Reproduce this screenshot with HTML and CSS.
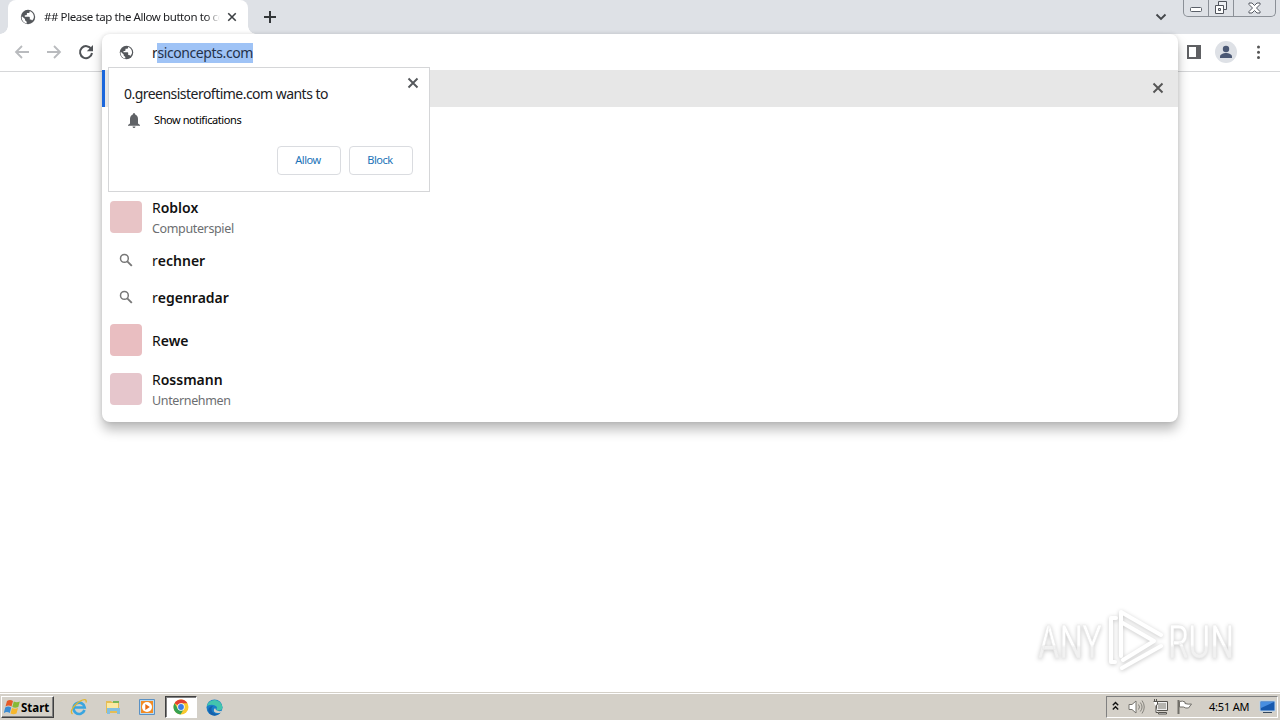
FILE: index.html
```html
<!DOCTYPE html>
<html lang="en">

<head>
  <meta charset="UTF-8">
  <title>Browser Desktop</title>
  <link rel="stylesheet" href="styles.css">
</head>

<body>
  <!-- Shared icons -->
  <svg class="defs" width="0" height="0">
    <symbol id="globe" viewBox="0 0 16 16">
      <circle cx="8" cy="8" r="7.2" fill="#55585c"/>
      <path d="M1.9 7.2 5 10.1v1.2l1.7 1.5v1.7C3.8 14 1.8 11.500 1.600 8.500zM9.700 1.900v.8c0 .8-.6 1.400-1.400 1.400H6.900v1.400c0 .5-.4.8-.8.8H4.800v1.500h4.300c.4 0 .7.300.7.700v2.100h.8c.7 0 1.200.4 1.400 1 1.200-1 1.900-2.300 1.900-3.800 0-2.600-1.700-5-4.200-5.900z" fill="#fff"/>
    </symbol>
    <symbol id="cross" viewBox="0 0 12 12">
      <path d="M1.500 1.500l9 9M10.500 1.500l-9 9" fill="none" stroke="currentColor" stroke-width="1.900"/>
    </symbol>
    <symbol id="search" viewBox="0 0 14 14">
      <circle cx="5.400" cy="5.400" r="3.900" fill="none" stroke="#777" stroke-width="1.500"/>
      <path d="M8.300 8.300l4.500 4.500" stroke="#777" stroke-width="1.900"/>
    </symbol>
  </svg>

  <div class="screen">
    <!-- Tab strip -->
    <div class="tab-strip">
      <div class="tab">
        <svg class="tab-icon" width="16" height="16"><use href="#globe"/></svg>
        <span class="tab-title">## Please tap the Allow button to co</span>
        <svg class="tab-close" width="10" height="10"><use href="#cross"/></svg>
      </div>
      <svg class="new-tab" width="14" height="14" viewBox="0 0 14 14"><path d="M7 1v12M1 7h12" stroke="#333639" stroke-width="2"/></svg>
      <svg class="tab-search" width="12" height="8" viewBox="0 0 12 8"><path d="M1.500 1.500L6 6l4.500-4.500" fill="none" stroke="#44474b" stroke-width="1.900"/></svg>
      <div class="window-buttons">
        <span class="wb wb-min"><svg width="13" height="6" viewBox="0 0 13 6"><rect x=".5" y=".5" width="11" height="4" rx="1" fill="#fff" stroke="#5b6069"/></svg></span>
        <span class="wb wb-max"><svg width="14" height="14" viewBox="0 0 14 14"><path d="M4.500.500h8v8h-8z" fill="#eef0f4" stroke="#50545c"/><path d="M1.500 4.500h8v8h-8z" fill="#fff" stroke="#50545c"/><path d="M4.500 7.500h2v2h-2z" fill="#dee1e6" stroke="#50545c"/></svg></span>
        <span class="wb wb-close"><svg width="13" height="12" viewBox="0 0 13 12"><path d="M1 1h3l2.500 2.500L9 1h3v1.500L8.500 6 12 9.500V11H9L6.500 8.500 4 11H1V9.500L4.500 6 1 2.500z" fill="#fff" stroke="#555962"/></svg></span>
      </div>
    </div>

    <!-- Toolbar -->
    <div class="toolbar">
      <svg class="nav back" width="16" height="14" viewBox="0 0 16 14"><path d="M15 7H2M8 1L2 7l6 6" fill="none" stroke="#b9bbbe" stroke-width="1.800"/></svg>
      <svg class="nav" width="16" height="14" viewBox="0 0 16 14"><path d="M1 7h13M8 1l6 6-6 6" fill="none" stroke="#b9bbbe" stroke-width="1.800"/></svg>
      <svg class="nav" width="16" height="16" viewBox="0 0 16 16"><path d="M13.300 5.200A6 6 0 1 0 14 9" fill="none" stroke="#505357" stroke-width="2"/><path d="M15 1v6.200H8.800z" fill="#505357"/></svg>
      <div class="toolbar-right">
        <svg width="14" height="14" viewBox="0 0 14 14"><path d="M0 0h14v14H0zM2 2v10h7V2z" fill="#5f6063" fill-rule="evenodd"/></svg>
        <svg width="22" height="22" viewBox="0 0 22 22"><circle cx="11" cy="11" r="11" fill="#dee1e6"/><circle cx="11" cy="8" r="3.200" fill="#4b5874"/><path d="M5 17v-1.500c0-2.300 3.500-3.500 6-3.500s6 1.200 6 3.500V17z" fill="#4b5874"/></svg>
        <svg width="4" height="14" viewBox="0 0 4 14"><circle cx="2.500" cy="2" r="1.500" fill="#555"/><circle cx="2.500" cy="7.300" r="1.500" fill="#555"/><circle cx="2.500" cy="12.500" r="1.500" fill="#555"/></svg>
      </div>
    </div>

    <!-- Page -->
    <div class="page">
      <svg class="watermark" width="204" height="68" viewBox="0 0 204 68">
        <linearGradient id="fade" x1="0" y1="0" x2="0" y2="1">
          <stop offset=".55" stop-color="#fff"/>
          <stop offset=".6" stop-color="#f1f1f1"/>
        </linearGradient>
        <g class="mark-text" fill="url(#fade)">
          <text x="3" y="52" textLength="64" lengthAdjust="spacingAndGlyphs">ANY</text>
          <text x="133" y="52" textLength="66" lengthAdjust="spacingAndGlyphs">RUN</text>
        </g>
        <g class="mark-logo">
          <path d="M81 12h-5v44h4"/>
          <path d="M86 50V6l40 23M86 16l33 19-31 19M87 62l39-22"/>
        </g>
      </svg>
    </div>

    <!-- Taskbar -->
    <div class="taskbar">
      <div class="start">
        <svg width="17" height="16" viewBox="0 0 17 16"><path d="M3 2q3-2 6 0L7.500 7.500q-3-1.800-6 0z" fill="#e65a27"/><path d="M9.800 2.400q3 1.600 6 0L14.300 8q-3 1.600-6 0z" fill="#86b936"/><path d="M1.200 8.500q3-1.800 6 0L5.800 14q-3-1.800-6 0z" fill="#3b8cd3"/><path d="M8 9q3 1.600 6 0l-1.500 5.500q-3 1.500-6 0z" fill="#f6b72d"/></svg>
        <span>Start</span>
      </div>
      <div class="task ie">
        <svg width="18" height="18" viewBox="0 0 18 18"><path d="M14.500 12A5.600 5.600 0 1 1 14.700 9.500H4.500" fill="none" stroke="#39a5e0" stroke-width="2.600"/><path d="M2.500 16C-1 13.500 5 5 12.500 2q4.500-1.500 3.500 2.500" fill="none" stroke="#dfb632" stroke-width="1.300"/></svg>
      </div>
      <div class="task">
        <svg width="18" height="18" viewBox="0 0 18 18"><path d="M2 3h5l1 1h7v11H2z" fill="#e5bd55"/><path d="M3 5h11v7H3z" fill="#fbe9a1"/><path d="M9 3h6v2H9z" fill="#77b65a"/><path d="M3 10h13v6h-3v-3H6v3H3z" fill="#83bfe0"/></svg>
      </div>
      <div class="task">
        <svg width="18" height="18" viewBox="0 0 18 18"><path d="M1.500 1.500h15v15h-15z" fill="#b7daf2" stroke="#5a91c4"/><path d="M3 3h12v12H3z" fill="#f28b24"/><circle cx="9" cy="9" r="5" fill="#fff"/><path d="M7.300 6v6l4.500-3z" fill="#e86c14"/></svg>
      </div>
      <div class="task active">
        <svg width="16" height="16" viewBox="0 0 16 16"><circle cx="8" cy="8" r="7.500" fill="#f9c92f"/><path d="M8 8L1.500 4.200A7.500 7.500 0 0 1 14.500 4.300H8z" fill="#e34133"/><path d="M1.500 4.200A7.500 7.500 0 0 0 7.500 15.500L11 9.800 8 8 4.800 9.500z" fill="#36a152"/><circle cx="8" cy="8" r="3.700" fill="#fff"/><circle cx="8" cy="8" r="2.900" fill="#3c7de6"/></svg>
      </div>
      <div class="task edge">
        <svg width="17" height="17" viewBox="0 0 17 17"><circle cx="8.500" cy="8.500" r="8" fill="#197ec8"/><path d="M.8 7A8 8 0 0 1 16.500 8q0 3.500-4 3.500-2.500 0-2-1.500 1-1.200 0-2.500Q7 4.500.8 7z" fill="#43c5ad"/><path d="M7 7q-3 2.500-.5 6 3 3.300 7.500 1.500-5 4-10 .5Q.5 11 4 8q1.500-1.300 3-1z" fill="#1561ac"/><path d="M10 11q2.500 2 6.500.5l-1.300 2q-5 1.500-7.200-1-.8-2 1-3.500z" fill="#d4d0c8"/></svg>
      </div>
      <div class="tray">
        <svg class="chevrons" width="7" height="10" viewBox="0 0 7 10"><path d="M.8 4.200L3.500 1.500l2.700 2.700M.8 8.500l2.700-2.700 2.700 2.700" fill="none" stroke="#111" stroke-width="1.400"/></svg>
        <svg class="speaker" width="17" height="16" viewBox="0 0 17 16"><path d="M1 5.500h3L8 2v12l-4-3.500H1z" fill="#fff" stroke="#77756f"/><path d="M10.500 5.500q2 2.500 0 5M12.300 3.500q3.500 4.500 0 9M14 1.500q4.500 6.500 0 13" fill="none" stroke="#85837d"/></svg>
        <svg class="network" width="17" height="16" viewBox="0 0 17 16"><path d="M4.500 2.500h11v9h-11z" fill="#eee" stroke="#55534e"/><path d="M6 4h8v6H6z" fill="#b5b4af"/><path d="M6.500 13.500h8v1.500h-8z" fill="#eee" stroke="#55534e"/><path d="M1.500 2.500h4v3l-1.500 1v7h2" fill="#fff" stroke="#55534e"/><path d="M2.500 0v2M4.500 0v2" stroke="#55534e"/></svg>
        <svg class="flag" width="17" height="16" viewBox="0 0 17 16"><path d="M2.500 1v14" stroke="#716f69" stroke-width="2"/><path d="M3.500 2.500q3-1 5.500.5v1.500q3 1 6.500.5L12.500 9q-3 .5-5-1h-4z" fill="#fff" stroke="#716f69"/></svg>
        <span class="clock">4:51 AM</span>
        <svg class="desktop" width="17" height="14" viewBox="0 0 17 14"><path d="M1 1h15v10H1z" fill="#1759ae" stroke="#b9d5ef"/><path d="M2 2h13L2 8z" fill="#488ee0"/><path d="M4 12.500h9" stroke="#34475c"/></svg>
      </div>
    </div>

    <!-- Omnibox with suggestions -->
    <div class="omnibox">
      <div class="address">
        <svg class="site-icon" width="15" height="15"><use href="#globe"/></svg>
        <span class="url">r<mark>siconcepts.com</mark></span>
      </div>
      <div class="suggestion selected">
        <svg class="remove" width="12" height="12"><use href="#cross"/></svg>
      </div>
      <div class="suggestion"></div>
      <div class="suggestion tall"></div>
      <div class="suggestion tall">
        <span class="thumb roblox"></span>
        <div class="label"><div class="term">R<b>oblox</b></div><div class="sub">Computerspiel</div></div>
      </div>
      <div class="suggestion">
        <svg class="glass" width="14" height="14"><use href="#search"/></svg>
        <div class="label"><div class="term">r<b>echner</b></div></div>
      </div>
      <div class="suggestion">
        <svg class="glass" width="14" height="14"><use href="#search"/></svg>
        <div class="label"><div class="term">r<b>egenradar</b></div></div>
      </div>
      <div class="suggestion tall">
        <span class="thumb rewe"></span>
        <div class="label"><div class="term">R<b>ewe</b></div></div>
      </div>
      <div class="suggestion tall">
        <span class="thumb rossmann"></span>
        <div class="label"><div class="term">R<b>ossmann</b></div><div class="sub">Unternehmen</div></div>
      </div>
    </div>

    <!-- Permission prompt -->
    <div class="prompt">
      <svg class="prompt-close" width="12" height="12"><use href="#cross"/></svg>
      <div class="prompt-title">0.greensisteroftime.com wants to</div>
      <div class="prompt-row">
        <svg width="12" height="15" viewBox="0 0 12 15"><path d="M6 0q1.200 0 1.200 1.500Q10 2.500 10 6v4.500l2 1.500v.8H0V12l2-1.500V6q0-3.500 2.800-4.500Q4.800 0 6 0zM4.500 13.500h3Q7.300 15 6 15t-1.500-1.500z" fill="#5f6266"/></svg>
        <span>Show notifications</span>
      </div>
      <div class="prompt-actions">
        <button>Allow</button>
        <button>Block</button>
      </div>
    </div>
  </div>
</body>

</html>
```
FILE: styles.css
```css
body {
  margin: 0;
  font-family: 'Noto Sans', 'DejaVu Sans', sans-serif;
  color: #202124;
}

.defs {
  position: absolute;
}

svg {
  display: block;
  flex: none;
}

.screen {
  position: relative;
  width: 1280px;
  height: 720px;
  overflow: hidden;
  display: flex;
  flex-direction: column;
  background: #fff;
}

/* Tab strip */
.tab-strip {
  height: 34px;
  display: flex;
  background: #dee1e6;
}

.tab {
  position: relative;
  box-sizing: border-box;
  width: 240px;
  margin-left: 8px;
  padding: 0 11px 0 12px;
  display: flex;
  align-items: center;
  background: #fff;
  border-radius: 8px 8px 0 0;
}

/* Flared feet of the tab */
.tab::before,
.tab::after {
  content: '';
  position: absolute;
  bottom: 0;
  width: 8px;
  height: 8px;
}

.tab::before {
  left: -8px;
  background: radial-gradient(circle at 0 0, transparent 7.5px, #fff 8px);
}

.tab::after {
  right: -8px;
  background: radial-gradient(circle at 100% 0, transparent 7.5px, #fff 8px);
}

.tab-title {
  width: 176px;
  margin-left: 8px;
  padding-bottom: 1px;
  white-space: nowrap;
  font-size: 11.5px;
  letter-spacing: -0.42px;
  -webkit-mask-image: linear-gradient(to right, #000 92%, transparent);
  mask-image: linear-gradient(to right, #000 92%, transparent);
}

.tab-close {
  margin-left: auto;
  color: #3c4043;
}

.new-tab {
  margin: 10px 0 0 15px;
}

.tab-search {
  margin: 13px 16px 0 auto;
}

.window-buttons {
  box-sizing: border-box;
  width: 93px;
  height: 17px;
  margin-right: 4px;
  display: flex;
  border: 1px solid #8b9097;
  border-top: none;
  border-radius: 0 0 5px 5px;
}

.wb {
  display: flex;
  justify-content: center;
  align-items: center;
  width: 24px;
  border-right: 1px solid #8b9097;
}

.wb-min {
  align-items: flex-end;
  padding-bottom: 3px;
  box-sizing: border-box;
  width: 25px;
}

.wb-close {
  flex: 1;
  border-right: none;
}

/* Toolbar */
.toolbar {
  box-sizing: border-box;
  height: 38px;
  display: flex;
  align-items: center;
  gap: 16px;
  padding: 0 20px 2px 14px;
  border-bottom: 1px solid #d6d7d9;
}

.toolbar-right {
  margin-left: auto;
  display: flex;
  align-items: center;
  gap: 14px;
}

.toolbar-right svg:last-child {
  margin-left: 5px;
}

.page {
  flex: 1;
  display: flex;
  justify-content: flex-end;
  align-items: flex-end;
  padding: 0 41px 18px 0;
}

.watermark {
  overflow: visible;
  filter: drop-shadow(0 1px 2px rgba(0, 0, 0, 0.22));
}

.mark-text {
  font: 46px 'Roboto', sans-serif;
  stroke: #e8e8e8;
  stroke-width: 0.5;
}

.mark-logo {
  fill: none;
  stroke: #fff;
  stroke-width: 4;
  stroke-linejoin: round;
  stroke-linecap: round;
}

/* Taskbar */
.taskbar {
  box-sizing: border-box;
  height: 28px;
  display: flex;
  align-items: center;
  padding: 1px 2px 0 1px;
  border-top: 1px solid #d4d0c8;
  box-shadow: inset 0 1px #fff;
  background: #d4d0c8;
}

.start {
  box-sizing: border-box;
  width: 53px;
  height: 22px;
  display: flex;
  align-items: center;
  padding-left: 2px;
  border: 1px solid;
  border-color: #fff #404040 #404040 #fff;
  box-shadow: inset -1px -1px #808080;
  font-size: 11.5px;
  font-weight: bold;
  color: #000;
}

.task {
  box-sizing: border-box;
  width: 32px;
  height: 22px;
  margin-right: 2px;
  display: flex;
  justify-content: center;
  align-items: center;
}

.ie {
  margin-left: 9px;
}

.edge {
  width: 31px;
}

.active {
  background: #fff;
  border: 1px solid;
  border-color: #404040 #fff #fff #404040;
  box-shadow: inset 1px 1px #808080;
}

.tray {
  box-sizing: border-box;
  width: 172px;
  height: 22px;
  margin-left: auto;
  padding: 0 1px 0 5px;
  display: flex;
  align-items: center;
  border: 1px solid;
  border-color: #808080 #fff #fff #808080;
}

.chevrons { margin-bottom: 2px; }
.speaker { margin-left: 9px; }
.network { margin-left: 7px; }
.flag { margin-left: 7px; }

.clock {
  margin-left: 16px;
  padding-bottom: 1px;
  font-size: 11px;
  letter-spacing: -0.2px;
  white-space: nowrap;
  color: #000;
}

.desktop {
  margin-left: auto;
}

/* Omnibox */
.omnibox {
  position: absolute;
  left: 102px;
  top: 34px;
  width: 1076px;
  height: 388px;
  background: #fff;
  border-radius: 8px;
  box-shadow: 0 8px 12px rgba(0, 0, 0, 0.26), 0 0 4px rgba(0, 0, 0, 0.12);
}

.address {
  height: 36px;
  display: flex;
  align-items: center;
}

.site-icon {
  margin-left: 16.5px;
}

.url {
  margin-left: 18.5px;
  padding-top: 1px;
  font-size: 14px;
  line-height: 20px;
  letter-spacing: -0.4px;
}

mark {
  display: inline-block;
  background: #9fc3f6;
  color: #25324a;
}

.suggestion {
  box-sizing: border-box;
  height: 37px;
  display: flex;
  align-items: center;
  padding-left: 8px;
}

.tall {
  height: 49px;
}

.selected {
  justify-content: flex-end;
  padding-right: 14px;
  background: linear-gradient(#1a66dc, #1a66dc) left / 3px 100% no-repeat #e7e7e7;
}

.remove {
  margin-bottom: 2px;
  color: #555;
}

.thumb {
  width: 32px;
  height: 32px;
  margin-bottom: 1px;
  border-radius: 4px;
}

.roblox { background: #e8c4c6; }
.rewe { background: #e9bec1; }
.rossmann { background: #e6c6cc; }

.glass {
  margin: 0 9px 2px;
}

.label {
  margin-left: 10px;
}

.term {
  font-size: 14px;
  line-height: 20px;
  color: #111;
}

.term b {
  font-weight: 600;
}

.sub {
  margin-bottom: -1px;
  font-size: 12.5px;
  line-height: 21px;
  letter-spacing: -0.36px;
  color: #6c6e71;
}

/* Permission prompt */
.prompt {
  position: absolute;
  left: 108px;
  top: 67px;
  box-sizing: border-box;
  width: 322px;
  height: 125px;
  padding: 16px 16px 16px 15px;
  background: #fff;
  border: 1px solid #d5d6d8;
}

.prompt-close {
  position: absolute;
  top: 9px;
  right: 10px;
  color: #55585c;
}

.prompt-title {
  font-size: 14px;
  line-height: 20px;
  letter-spacing: -0.53px;
}

.prompt-row {
  display: flex;
  align-items: center;
  height: 16px;
  margin-top: 8px;
  padding-left: 4px;
  font-size: 11px;
  letter-spacing: -0.41px;
  color: #000;
}

.prompt-row span {
  margin-left: 14px;
  padding-bottom: 2px;
}

.prompt-actions {
  display: flex;
  justify-content: flex-end;
  gap: 8px;
  margin-top: 18px;
}

button {
  width: 64px;
  height: 29px;
  padding: 0 2px 2px 0;
  border: 1px solid #dadce0;
  border-radius: 4px;
  background: #fff;
  font-family: inherit;
  font-size: 11px;
  letter-spacing: -0.45px;
  color: #1a73b8;
}
```
